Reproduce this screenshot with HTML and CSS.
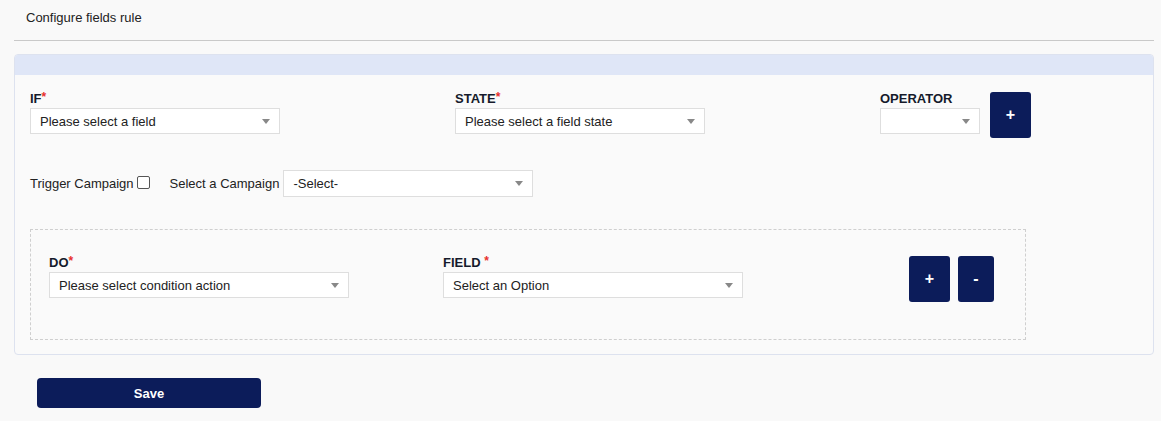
FILE: index.html
```html
<!DOCTYPE html>
<html lang="en">
<head>
    <meta charset="UTF-8">
    <meta name="viewport" content="width=device-width, initial-scale=1.0">
    <title>Configure fields rule</title>
    <link rel="stylesheet" href="styles.css">
</head>
<body>
    <div id="pageWrapper">
        <div class="pageTitle">Configure fields rule</div>

        <div class="rulePanel">
            <div class="panelHeader"></div>
            <div class="panelBody">

                <div class="ifRow">
                    <div class="fieldGroup">
                        <label class="fieldLabel">IF<span class="req">*</span></label>
                        <div class="selectBox wide">
                            <select><option>Please select a field</option></select>
                        </div>
                    </div>
                    <div class="fieldGroup">
                        <label class="fieldLabel">STATE<span class="req">*</span></label>
                        <div class="selectBox wide">
                            <select><option>Please select a field state</option></select>
                        </div>
                    </div>
                    <div class="fieldGroup operatorGroup">
                        <label class="fieldLabel">OPERATOR</label>
                        <div class="selectBox small">
                            <select><option></option></select>
                        </div>
                    </div>
                    <button class="navyBtn addBtn">+</button>
                </div>

                <div class="campaignRow">
                    <span>Trigger Campaign</span>
                    <span class="checkBox"></span>
                    <span class="campaignLabel">Select a Campaign</span>
                    <div class="selectBox wide tall">
                        <select><option>-Select-</option></select>
                    </div>
                </div>

                <div class="actionBox">
                    <div class="fieldGroup doGroup">
                        <label class="fieldLabel">DO<span class="req">*</span></label>
                        <div class="selectBox large">
                            <select><option>Please select condition action</option></select>
                        </div>
                    </div>
                    <div class="fieldGroup doGroup">
                        <label class="fieldLabel">FIELD <span class="req">*</span></label>
                        <div class="selectBox large">
                            <select><option>Select an Option</option></select>
                        </div>
                    </div>
                    <div class="actionButtons">
                        <button class="navyBtn addBtn">+</button>
                        <button class="navyBtn removeBtn">-</button>
                    </div>
                </div>

            </div>
        </div>

        <button class="navyBtn saveBtn">Save</button>
    </div>
</body>
</html>
```

FILE: styles.css
```css
body {
    margin: 0;
    background-color: #f9f9f9;
    font-family: "Liberation Sans", Arial, sans-serif;
    font-size: 13px;
    color: #222;
}

#pageWrapper {
    padding: 0 7px 0 14px;
}

.pageTitle {
    padding: 10px 12px 0;
    height: 30px;
    line-height: 16px;
    border-bottom: 1px solid #c9c9c9;
}

.rulePanel {
    margin-top: 13px;
    border: 1px solid #dde2ef;
    border-radius: 4px;
    background-color: #fafafa;
    overflow: hidden;
}

.panelHeader {
    height: 20px;
    background-color: #dfe6f7;
}

.panelBody {
    padding: 16px 16px 14px 15px;
}

.ifRow {
    display: flex;
    align-items: flex-start;
}

.fieldGroup {
    width: 425px;
    display: flex;
    flex-direction: column;
}

.operatorGroup {
    width: auto;
}

.fieldLabel {
    font-weight: bold;
    line-height: 16px;
    height: 17px;
    color: #151a2b;
}

.req {
    color: #e8302c;
    vertical-align: top;
    font-size: 12px;
    line-height: 13px;
}

.selectBox {
    position: relative;
    height: 26px;
    box-sizing: border-box;
    border: 1px solid #dedede;
    background-color: #fff;
}

.selectBox select {
    appearance: none;
    -webkit-appearance: none;
    border: none;
    background: transparent;
    width: 100%;
    height: 100%;
    padding: 0 24px 0 9px;
    font-family: inherit;
    font-size: 13px;
    color: #222;
    outline: none;
}

.selectBox::after {
    content: "";
    position: absolute;
    right: 9px;
    top: 10px;
    border-left: 4px solid transparent;
    border-right: 4px solid transparent;
    border-top: 5px solid #888;
    pointer-events: none;
}

.wide {
    width: 250px;
}

.small {
    width: 100px;
}

.large {
    width: 300px;
}

.tall {
    height: 27px;
}

.navyBtn {
    border: none;
    border-radius: 3px;
    background-color: #0c1c5a;
    color: #fff;
    font-family: inherit;
    font-weight: bold;
    cursor: pointer;
}

.addBtn {
    width: 41px;
    height: 46px;
    font-size: 16px;
    padding: 0;
}

.ifRow .addBtn {
    margin: 1px 0 0 10px;
}

.removeBtn {
    width: 36px;
    height: 46px;
    font-size: 16px;
    padding: 0;
}

.campaignRow {
    display: flex;
    align-items: center;
    margin-top: 32px;
    height: 27px;
}

.checkBox {
    width: 11px;
    height: 11px;
    border: 1px solid #555;
    border-radius: 2px;
    background-color: #fff;
    margin: -2px 0 0 3px;
}

.campaignLabel {
    margin: 0 4px 0 20px;
}

.actionBox {
    margin-top: 32px;
    width: 996px;
    height: 111px;
    box-sizing: border-box;
    border: 1px dashed #cfcfcf;
    padding: 25px 17px 0 18px;
    display: flex;
    align-items: flex-start;
}

.doGroup {
    width: 394px;
}

.actionButtons {
    display: flex;
    gap: 8px;
    margin: 1px 0 0 72px;
}

.saveBtn {
    margin: 23px 0 0 23px;
    width: 224px;
    height: 30px;
    font-size: 13px;
    border-radius: 4px;
}
```
